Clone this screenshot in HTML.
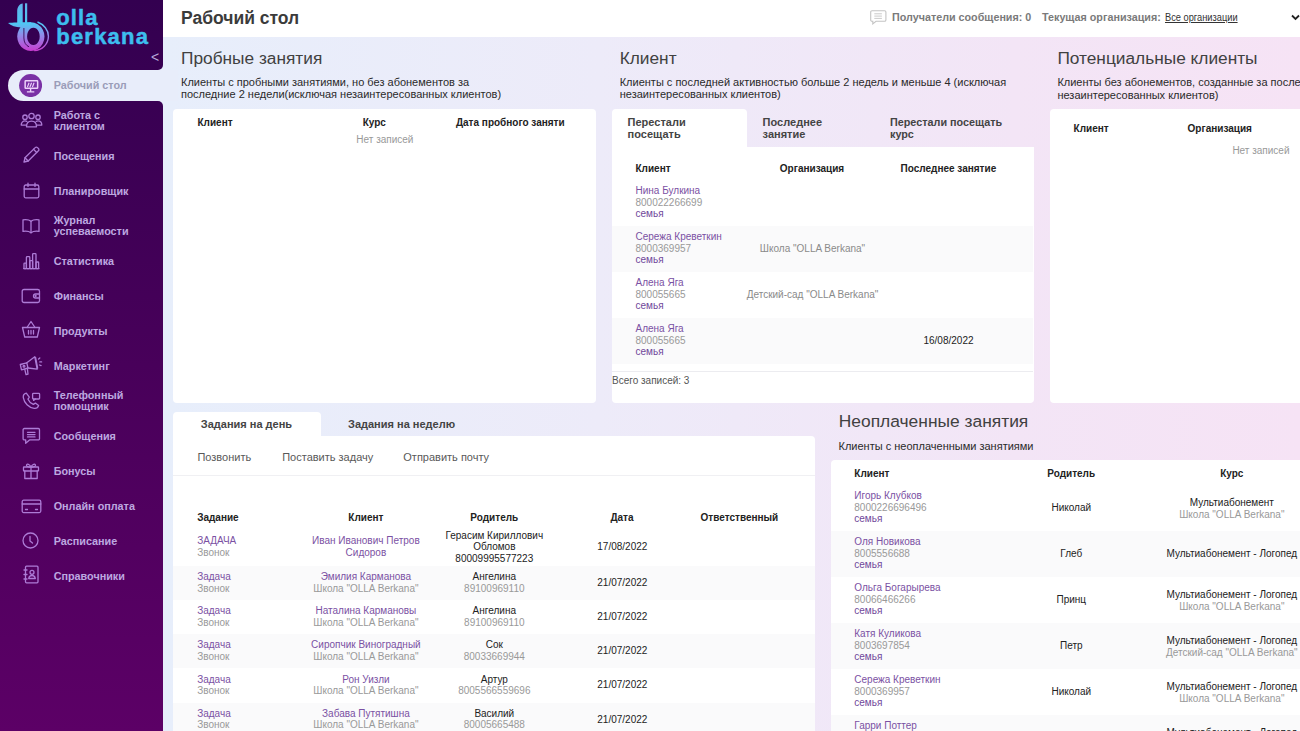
<!DOCTYPE html>
<html><head><meta charset="utf-8"><style>
html,body{margin:0;padding:0;}
body{width:1300px;height:731px;overflow:hidden;position:relative;font-family:"Liberation Sans", sans-serif;
background:linear-gradient(90deg,#e7eefb 0%,#e7eefb 12.5%,#edebf9 46%,#f3e5f6 78%,#f6e3f5 100%);}
.t{position:absolute;white-space:nowrap;line-height:1;}
.r{position:absolute;}
</style></head><body>
<div class="r" style="left:163px;top:0px;width:1137px;height:37px;background:#fff;"></div>
<div class="t" style="left:181.0px;top:10px;font-size:17.5px;font-weight:bold;color:#3b3b3b;">Рабочий стол</div>
<svg class="r" style="left:870px;top:10px" width="17" height="15" viewBox="0 0 17 15"><path d="M2 0.7h12.6a1.3 1.3 0 0 1 1.3 1.3v8a1.3 1.3 0 0 1-1.3 1.3H6l-3.2 2.6v-2.6H2a1.3 1.3 0 0 1-1.3-1.3V2A1.3 1.3 0 0 1 2 0.7z" fill="none" stroke="#c4c4c4" stroke-width="1.1"/><path d="M4.3 3.8h7.6M4.3 6.1h7.6M4.3 8.4h7.6" stroke="#c4c4c4" stroke-width="0.9"/></svg>
<div class="t" style="left:892.0px;top:12px;font-size:10.75px;font-weight:bold;color:#7a7a7a;">Получатели сообщения: 0</div>
<div class="t" style="left:1042.0px;top:12px;font-size:10.75px;font-weight:bold;color:#7a7a7a;">Текущая организация:</div>
<div class="t" style="left:1165.0px;top:12px;font-size:10.5px;color:#333;text-decoration:underline;transform-origin:0 0;transform:scaleX(0.883);">Все организации</div>
<svg class="r" style="left:1291px;top:14px" width="9" height="7" viewBox="0 0 9 7"><path d="M1 1.5l3.5 3.5 3.5-3.5" fill="none" stroke="#222" stroke-width="1.8"/></svg>
<div class="t" style="left:181.0px;top:50px;font-size:17.3px;color:#414141;">Пробные занятия</div>
<div class="t" style="left:181.0px;top:77px;font-size:11px;color:#2a2a2a;">Клиенты с пробными занятиями, но без абонементов за</div>
<div class="t" style="left:181.0px;top:89px;font-size:11px;color:#2a2a2a;">последние 2 недели(исключая незаинтересованных клиентов)</div>
<div class="r" style="left:173px;top:109px;width:423px;height:293.6px;background:#fff;border-radius:4px;"></div>
<div class="t" style="left:197.5px;top:118px;font-size:10px;font-weight:bold;color:#222;">Клиент</div>
<div class="t" style="left:374.3px;top:118px;font-size:10px;font-weight:bold;color:#222;transform:translateX(-50%);">Курс</div>
<div class="t" style="left:510.3px;top:118px;font-size:10px;font-weight:bold;color:#222;transform:translateX(-50%);">Дата пробного заняти</div>
<div class="t" style="left:384.9px;top:135px;font-size:10px;color:#999;transform:translateX(-50%);">Нет записей</div>
<div class="t" style="left:619.7px;top:50px;font-size:17.3px;color:#414141;">Клиент</div>
<div class="t" style="left:619.7px;top:77px;font-size:11px;color:#2a2a2a;">Клиенты с последней активностью больше 2 недель и меньше 4 (исключая</div>
<div class="t" style="left:619.7px;top:89px;font-size:11px;color:#2a2a2a;">незаинтересованных клиентов)</div>
<div class="r" style="left:612px;top:109px;width:135px;height:40px;background:#fff;border-radius:4px 4px 0 0;"></div>
<div class="r" style="left:612px;top:146.6px;width:422px;height:256px;background:#fff;border-radius:0 0 4px 4px;"></div>
<div class="t" style="left:627.6px;top:117px;font-size:11px;font-weight:bold;color:#444;">Перестали</div>
<div class="t" style="left:627.6px;top:129px;font-size:11px;font-weight:bold;color:#444;">посещать</div>
<div class="t" style="left:762.6px;top:117px;font-size:11px;font-weight:bold;color:#444;">Последнее</div>
<div class="t" style="left:762.6px;top:129px;font-size:11px;font-weight:bold;color:#444;">занятие</div>
<div class="t" style="left:890.0px;top:117px;font-size:10.8px;font-weight:bold;color:#444;">Перестали посещать</div>
<div class="t" style="left:890.0px;top:129px;font-size:10.8px;font-weight:bold;color:#444;">курс</div>
<div class="t" style="left:635.5px;top:164px;font-size:10px;font-weight:bold;color:#222;">Клиент</div>
<div class="t" style="left:812.0px;top:164px;font-size:10px;font-weight:bold;color:#222;transform:translateX(-50%);">Организация</div>
<div class="t" style="left:948.4px;top:164px;font-size:10px;font-weight:bold;color:#222;transform:translateX(-50%);">Последнее занятие</div>
<div class="t" style="left:635.5px;top:186px;font-size:10px;color:#7b51a3;">Нина Булкина</div>
<div class="t" style="left:635.5px;top:198px;font-size:10px;color:#999;">800022266699</div>
<div class="t" style="left:635.5px;top:209px;font-size:10px;color:#70479a;">семья</div>
<div class="r" style="left:612px;top:226px;width:421px;height:46px;background:#fafafb;"></div>
<div class="t" style="left:635.5px;top:232px;font-size:10px;color:#7b51a3;">Сережа Креветкин</div>
<div class="t" style="left:635.5px;top:244px;font-size:10px;color:#999;">8000369957</div>
<div class="t" style="left:635.5px;top:255px;font-size:10px;color:#70479a;">семья</div>
<div class="t" style="left:812.5px;top:244px;font-size:10px;color:#8a8a8a;transform:translateX(-50%);">Школа "OLLA Berkana"</div>
<div class="t" style="left:635.5px;top:278px;font-size:10px;color:#7b51a3;">Алена Яга</div>
<div class="t" style="left:635.5px;top:290px;font-size:10px;color:#999;">800055665</div>
<div class="t" style="left:635.5px;top:301px;font-size:10px;color:#70479a;">семья</div>
<div class="t" style="left:812.5px;top:290px;font-size:10px;color:#8a8a8a;transform:translateX(-50%);">Детский-сад "OLLA Berkana"</div>
<div class="r" style="left:612px;top:318px;width:421px;height:45.6px;background:#fafafb;"></div>
<div class="t" style="left:635.5px;top:324px;font-size:10px;color:#7b51a3;">Алена Яга</div>
<div class="t" style="left:635.5px;top:336px;font-size:10px;color:#999;">800055665</div>
<div class="t" style="left:635.5px;top:347px;font-size:10px;color:#70479a;">семья</div>
<div class="t" style="left:948.5px;top:336px;font-size:10px;color:#222;transform:translateX(-50%);">16/08/2022</div>
<div class="r" style="left:612px;top:371px;width:421px;height:1px;background:#ececf0;"></div>
<div class="t" style="left:612.0px;top:376px;font-size:10px;color:#555;">Всего записей: 3</div>
<div class="t" style="left:1057.4px;top:50px;font-size:17.3px;color:#414141;">Потенциальные клиенты</div>
<div class="t" style="left:1057.4px;top:77px;font-size:11px;color:#2a2a2a;">Клиенты без абонементов, созданные за последние 2 недели (исключая</div>
<div class="t" style="left:1057.4px;top:90px;font-size:11px;color:#2a2a2a;">незаинтересованных клиентов)</div>
<div class="r" style="left:1050px;top:109px;width:260px;height:293.6px;background:#fff;border-radius:4px;"></div>
<div class="t" style="left:1073.6px;top:124px;font-size:10px;font-weight:bold;color:#222;">Клиент</div>
<div class="t" style="left:1187.6px;top:124px;font-size:10px;font-weight:bold;color:#222;">Организация</div>
<div class="t" style="left:1232.4px;top:146px;font-size:10px;color:#999;">Нет записей</div>
<div class="r" style="left:173px;top:411.5px;width:148px;height:30px;background:#fff;border-radius:4px 4px 0 0;"></div>
<div class="r" style="left:173px;top:436px;width:642px;height:300px;background:#fff;border-radius:0 4px 0 0;"></div>
<div class="t" style="left:200.8px;top:419px;font-size:11px;font-weight:bold;color:#444;">Задания на день</div>
<div class="t" style="left:348.0px;top:419px;font-size:11px;font-weight:bold;color:#444;">Задания на неделю</div>
<div class="t" style="left:197.4px;top:452px;font-size:11px;color:#595959;">Позвонить</div>
<div class="t" style="left:282.2px;top:452px;font-size:11px;color:#595959;">Поставить задачу</div>
<div class="t" style="left:403.3px;top:452px;font-size:11px;color:#595959;">Отправить почту</div>
<div class="r" style="left:173px;top:475px;width:642px;height:1px;background:#f0f0f3;"></div>
<div class="t" style="left:197.2px;top:513px;font-size:10px;font-weight:bold;color:#222;">Задание</div>
<div class="t" style="left:365.9px;top:513px;font-size:10px;font-weight:bold;color:#222;transform:translateX(-50%);">Клиент</div>
<div class="t" style="left:494.3px;top:513px;font-size:10px;font-weight:bold;color:#222;transform:translateX(-50%);">Родитель</div>
<div class="t" style="left:622.0px;top:513px;font-size:10px;font-weight:bold;color:#222;transform:translateX(-50%);">Дата</div>
<div class="t" style="left:739.4px;top:513px;font-size:10px;font-weight:bold;color:#222;transform:translateX(-50%);">Ответственный</div>
<div class="t" style="left:197.2px;top:536px;font-size:10px;color:#7b51a3;">ЗАДАЧА</div>
<div class="t" style="left:197.2px;top:548px;font-size:10px;color:#999;">Звонок</div>
<div class="t" style="left:365.9px;top:536px;font-size:10px;color:#7b51a3;transform:translateX(-50%);">Иван Иванович Петров</div>
<div class="t" style="left:365.9px;top:548px;font-size:10px;color:#7b51a3;transform:translateX(-50%);">Сидоров</div>
<div class="t" style="left:494.3px;top:531px;font-size:10px;color:#222;transform:translateX(-50%);">Герасим Кириллович</div>
<div class="t" style="left:494.3px;top:542px;font-size:10px;color:#222;transform:translateX(-50%);">Обломов</div>
<div class="t" style="left:494.3px;top:554px;font-size:10px;color:#222;transform:translateX(-50%);">80009995577223</div>
<div class="t" style="left:622.3px;top:542px;font-size:10px;color:#222;transform:translateX(-50%);">17/08/2022</div>
<div class="r" style="left:173px;top:566px;width:642px;height:34px;background:#fafafb;"></div>
<div class="t" style="left:197.2px;top:572px;font-size:10px;color:#7b51a3;">Задача</div>
<div class="t" style="left:197.2px;top:584px;font-size:10px;color:#999;">Звонок</div>
<div class="t" style="left:365.9px;top:572px;font-size:10px;color:#7b51a3;transform:translateX(-50%);">Эмилия Карманова</div>
<div class="t" style="left:365.9px;top:584px;font-size:10px;color:#999;transform:translateX(-50%);">Школа "OLLA Berkana"</div>
<div class="t" style="left:494.3px;top:572px;font-size:10px;color:#222;transform:translateX(-50%);">Ангелина</div>
<div class="t" style="left:494.3px;top:584px;font-size:10px;color:#999;transform:translateX(-50%);">89100969110</div>
<div class="t" style="left:622.3px;top:578px;font-size:10px;color:#222;transform:translateX(-50%);">21/07/2022</div>
<div class="t" style="left:197.2px;top:606px;font-size:10px;color:#7b51a3;">Задача</div>
<div class="t" style="left:197.2px;top:618px;font-size:10px;color:#999;">Звонок</div>
<div class="t" style="left:365.9px;top:606px;font-size:10px;color:#7b51a3;transform:translateX(-50%);">Наталина Кармановы</div>
<div class="t" style="left:365.9px;top:618px;font-size:10px;color:#999;transform:translateX(-50%);">Школа "OLLA Berkana"</div>
<div class="t" style="left:494.3px;top:606px;font-size:10px;color:#222;transform:translateX(-50%);">Ангелина</div>
<div class="t" style="left:494.3px;top:618px;font-size:10px;color:#999;transform:translateX(-50%);">89100969110</div>
<div class="t" style="left:622.3px;top:612px;font-size:10px;color:#222;transform:translateX(-50%);">21/07/2022</div>
<div class="r" style="left:173px;top:634px;width:642px;height:34px;background:#fafafb;"></div>
<div class="t" style="left:197.2px;top:640px;font-size:10px;color:#7b51a3;">Задача</div>
<div class="t" style="left:197.2px;top:652px;font-size:10px;color:#999;">Звонок</div>
<div class="t" style="left:365.9px;top:640px;font-size:10px;color:#7b51a3;transform:translateX(-50%);">Сиропчик Виноградный</div>
<div class="t" style="left:365.9px;top:652px;font-size:10px;color:#999;transform:translateX(-50%);">Школа "OLLA Berkana"</div>
<div class="t" style="left:494.3px;top:640px;font-size:10px;color:#222;transform:translateX(-50%);">Сок</div>
<div class="t" style="left:494.3px;top:652px;font-size:10px;color:#999;transform:translateX(-50%);">80033669944</div>
<div class="t" style="left:622.3px;top:646px;font-size:10px;color:#222;transform:translateX(-50%);">21/07/2022</div>
<div class="t" style="left:197.2px;top:675px;font-size:10px;color:#7b51a3;">Задача</div>
<div class="t" style="left:197.2px;top:686px;font-size:10px;color:#999;">Звонок</div>
<div class="t" style="left:365.9px;top:675px;font-size:10px;color:#7b51a3;transform:translateX(-50%);">Рон Уизли</div>
<div class="t" style="left:365.9px;top:686px;font-size:10px;color:#999;transform:translateX(-50%);">Школа "OLLA Berkana"</div>
<div class="t" style="left:494.3px;top:675px;font-size:10px;color:#222;transform:translateX(-50%);">Артур</div>
<div class="t" style="left:494.3px;top:686px;font-size:10px;color:#999;transform:translateX(-50%);">8005566559696</div>
<div class="t" style="left:622.3px;top:680px;font-size:10px;color:#222;transform:translateX(-50%);">21/07/2022</div>
<div class="r" style="left:173px;top:703px;width:642px;height:40px;background:#fafafb;"></div>
<div class="t" style="left:197.2px;top:709px;font-size:10px;color:#7b51a3;">Задача</div>
<div class="t" style="left:197.2px;top:720px;font-size:10px;color:#999;">Звонок</div>
<div class="t" style="left:365.9px;top:709px;font-size:10px;color:#7b51a3;transform:translateX(-50%);">Забава Путятишна</div>
<div class="t" style="left:365.9px;top:720px;font-size:10px;color:#999;transform:translateX(-50%);">Школа "OLLA Berkana"</div>
<div class="t" style="left:494.3px;top:709px;font-size:10px;color:#222;transform:translateX(-50%);">Василий</div>
<div class="t" style="left:494.3px;top:720px;font-size:10px;color:#999;transform:translateX(-50%);">80005665488</div>
<div class="t" style="left:622.3px;top:715px;font-size:10px;color:#222;transform:translateX(-50%);">21/07/2022</div>
<div class="t" style="left:838.8px;top:413px;font-size:17.4px;color:#414141;">Неоплаченные занятия</div>
<div class="t" style="left:838.5px;top:441px;font-size:11px;color:#2a2a2a;">Клиенты с неоплаченными занятиями</div>
<div class="r" style="left:831px;top:460px;width:480px;height:280px;background:#fff;border-radius:4px 0 0 0;"></div>
<div class="t" style="left:854.3px;top:469px;font-size:10px;font-weight:bold;color:#222;">Клиент</div>
<div class="t" style="left:1071.2px;top:469px;font-size:10px;font-weight:bold;color:#222;transform:translateX(-50%);">Родитель</div>
<div class="t" style="left:1231.8px;top:469px;font-size:10px;font-weight:bold;color:#222;transform:translateX(-50%);">Курс</div>
<div class="t" style="left:854.3px;top:491px;font-size:10px;color:#7b51a3;">Игорь Клубков</div>
<div class="t" style="left:854.3px;top:503px;font-size:10px;color:#999;">8000226696496</div>
<div class="t" style="left:854.3px;top:514px;font-size:10px;color:#70479a;">семья</div>
<div class="t" style="left:1071.3px;top:503px;font-size:10px;color:#222;transform:translateX(-50%);">Николай</div>
<div class="t" style="left:1231.8px;top:498px;font-size:10px;color:#222;transform:translateX(-50%);">Мультиабонемент</div>
<div class="t" style="left:1231.8px;top:510px;font-size:10px;color:#999;transform:translateX(-50%);">Школа "OLLA Berkana"</div>
<div class="r" style="left:831px;top:531px;width:469px;height:46px;background:#fafafb;"></div>
<div class="t" style="left:854.3px;top:537px;font-size:10px;color:#7b51a3;">Оля Новикова</div>
<div class="t" style="left:854.3px;top:549px;font-size:10px;color:#999;">8005556688</div>
<div class="t" style="left:854.3px;top:560px;font-size:10px;color:#70479a;">семья</div>
<div class="t" style="left:1071.3px;top:549px;font-size:10px;color:#222;transform:translateX(-50%);">Глеб</div>
<div class="t" style="left:1231.8px;top:549px;font-size:10px;color:#222;transform:translateX(-50%);">Мультиабонемент - Логопед</div>
<div class="t" style="left:854.3px;top:583px;font-size:10px;color:#7b51a3;">Ольга Богарырева</div>
<div class="t" style="left:854.3px;top:595px;font-size:10px;color:#999;">80066466266</div>
<div class="t" style="left:854.3px;top:606px;font-size:10px;color:#70479a;">семья</div>
<div class="t" style="left:1071.3px;top:595px;font-size:10px;color:#222;transform:translateX(-50%);">Принц</div>
<div class="t" style="left:1231.8px;top:590px;font-size:10px;color:#222;transform:translateX(-50%);">Мультиабонемент - Логопед</div>
<div class="t" style="left:1231.8px;top:602px;font-size:10px;color:#999;transform:translateX(-50%);">Школа "OLLA Berkana"</div>
<div class="r" style="left:831px;top:623px;width:469px;height:46px;background:#fafafb;"></div>
<div class="t" style="left:854.3px;top:629px;font-size:10px;color:#7b51a3;">Катя Куликова</div>
<div class="t" style="left:854.3px;top:641px;font-size:10px;color:#999;">8003697854</div>
<div class="t" style="left:854.3px;top:652px;font-size:10px;color:#70479a;">семья</div>
<div class="t" style="left:1071.3px;top:641px;font-size:10px;color:#222;transform:translateX(-50%);">Петр</div>
<div class="t" style="left:1231.8px;top:636px;font-size:10px;color:#222;transform:translateX(-50%);">Мультиабонемент - Логопед</div>
<div class="t" style="left:1231.8px;top:648px;font-size:10px;color:#999;transform:translateX(-50%);">Детский-сад "OLLA Berkana"</div>
<div class="t" style="left:854.3px;top:675px;font-size:10px;color:#7b51a3;">Сережа Креветкин</div>
<div class="t" style="left:854.3px;top:687px;font-size:10px;color:#999;">8000369957</div>
<div class="t" style="left:854.3px;top:698px;font-size:10px;color:#70479a;">семья</div>
<div class="t" style="left:1071.3px;top:687px;font-size:10px;color:#222;transform:translateX(-50%);">Николай</div>
<div class="t" style="left:1231.8px;top:682px;font-size:10px;color:#222;transform:translateX(-50%);">Мультиабонемент - Логопед</div>
<div class="t" style="left:1231.8px;top:694px;font-size:10px;color:#999;transform:translateX(-50%);">Школа "OLLA Berkana"</div>
<div class="r" style="left:831px;top:715px;width:469px;height:30px;background:#fafafb;"></div>
<div class="t" style="left:854.3px;top:721px;font-size:10px;color:#7b51a3;">Гарри Поттер</div>
<div class="t" style="left:854.3px;top:733px;font-size:10px;color:#999;">8000000000</div>
<div class="t" style="left:854.3px;top:744px;font-size:10px;color:#70479a;">семья</div>
<div class="t" style="left:1071.3px;top:733px;font-size:10px;color:#222;transform:translateX(-50%);">Николай</div>
<div class="t" style="left:1231.8px;top:728px;font-size:10px;color:#222;transform:translateX(-50%);">Мультиабонемент - Логопед</div>
<div class="t" style="left:1231.8px;top:740px;font-size:10px;color:#999;transform:translateX(-50%);">Школа "OLLA Berkana"</div>
<div class="r" style="left:0px;top:0px;width:163px;height:70px;background:linear-gradient(180deg,#330050 0%,#48005a 50%,#5c0066 100%);background-size:163px 731px;background-position:0 0;border-bottom-right-radius:5px;"></div>
<div class="r" style="left:0px;top:70px;width:40px;height:31px;background:linear-gradient(180deg,#330050 0%,#48005a 50%,#5c0066 100%);background-size:163px 731px;background-position:0 -70px;"></div>
<div class="r" style="left:0px;top:101px;width:163px;height:630px;background:linear-gradient(180deg,#330050 0%,#48005a 50%,#5c0066 100%);background-size:163px 731px;background-position:0 -101px;border-top-right-radius:5px;"></div>
<div class="r" style="left:8px;top:70px;width:170px;height:31px;background:#e8edfa;border-radius:15.5px 0 0 15.5px;"></div>
<svg class="r" style="left:19.2px;top:73.5px" width="23.2" height="23.2" viewBox="0 0 23.2 23.2"><circle cx="11.6" cy="11.6" r="11.5" fill="#7a31a5"/><rect x="6.15" y="6.85" width="12.5" height="7.4" rx="0.6" fill="none" stroke="#ecd2fa" stroke-width="1.5"/><path d="M8.6 12.6l1.3-3.4M11.1 12.6l1.3-3.4M13.6 12.6l1.3-3.4" stroke="#ecd2fa" stroke-width="1.2" stroke-linecap="round"/><path d="M11.6 14.5v2.8M7.9 17.9h7.4" stroke="#ecd2fa" stroke-width="1.4"/></svg>
<div class="t" style="left:53.7px;top:80px;font-size:10.8px;font-weight:bold;color:#9a9cb8;">Рабочий стол</div>
<div class="t" style="left:53.7px;top:110px;font-size:10.8px;font-weight:bold;color:#bda8e0;">Работа с</div>
<div class="t" style="left:53.7px;top:121px;font-size:10.8px;font-weight:bold;color:#bda8e0;">клиентом</div>
<div class="t" style="left:53.7px;top:151px;font-size:10.8px;font-weight:bold;color:#bda8e0;">Посещения</div>
<div class="t" style="left:53.7px;top:186px;font-size:10.8px;font-weight:bold;color:#bda8e0;">Планировщик</div>
<div class="t" style="left:53.7px;top:215px;font-size:10.8px;font-weight:bold;color:#bda8e0;">Журнал</div>
<div class="t" style="left:53.7px;top:226px;font-size:10.8px;font-weight:bold;color:#bda8e0;">успеваемости</div>
<div class="t" style="left:53.7px;top:256px;font-size:10.8px;font-weight:bold;color:#bda8e0;">Статистика</div>
<div class="t" style="left:53.7px;top:291px;font-size:10.8px;font-weight:bold;color:#bda8e0;">Финансы</div>
<div class="t" style="left:53.7px;top:326px;font-size:10.8px;font-weight:bold;color:#bda8e0;">Продукты</div>
<div class="t" style="left:53.7px;top:361px;font-size:10.8px;font-weight:bold;color:#bda8e0;">Маркетинг</div>
<div class="t" style="left:53.7px;top:390px;font-size:10.8px;font-weight:bold;color:#bda8e0;">Телефонный</div>
<div class="t" style="left:53.7px;top:401px;font-size:10.8px;font-weight:bold;color:#bda8e0;">помощник</div>
<div class="t" style="left:53.7px;top:431px;font-size:10.8px;font-weight:bold;color:#bda8e0;">Сообщения</div>
<div class="t" style="left:53.7px;top:466px;font-size:10.8px;font-weight:bold;color:#bda8e0;">Бонусы</div>
<div class="t" style="left:53.7px;top:501px;font-size:10.8px;font-weight:bold;color:#bda8e0;">Онлайн оплата</div>
<div class="t" style="left:53.7px;top:536px;font-size:10.8px;font-weight:bold;color:#bda8e0;">Расписание</div>
<div class="t" style="left:53.7px;top:571px;font-size:10.8px;font-weight:bold;color:#bda8e0;">Справочники</div>
<svg class="r" style="left:20px;top:112px" width="23" height="17" viewBox="0 0 23 17" fill="none" stroke="#ad7bd6" stroke-width="1.3" stroke-linecap="round" stroke-linejoin="round"><circle cx="11.5" cy="4" r="2.7"/><circle cx="5" cy="5.2" r="2.2"/><circle cx="18" cy="5.2" r="2.2"/><path d="M6.5 14.8c0-3.5 2.2-5.6 5-5.6s5 2.1 5 5.6z"/><path d="M6.8 9.4c-0.6-0.4-1.2-0.5-1.8-0.5-2.2 0-3.8 1.8-3.8 4.2h5.3"/><path d="M16.2 9.4c0.6-0.4 1.2-0.5 1.8-0.5 2.2 0 3.8 1.8 3.8 4.2h-5.3"/></svg>
<svg class="r" style="left:22px;top:146px" width="18" height="18" viewBox="0 0 18 18" fill="none" stroke="#ad7bd6" stroke-width="1.3" stroke-linecap="round" stroke-linejoin="round"><path d="M2 16l1-4.2L13.2 1.6a1.6 1.6 0 0 1 2.3 0l0.9 0.9a1.6 1.6 0 0 1 0 2.3L6.2 15z"/><path d="M11.5 3.3l3.2 3.2M3 11.8l3.2 3.2"/></svg>
<svg class="r" style="left:23px;top:182px" width="17" height="17" viewBox="0 0 17 17" fill="none" stroke="#ad7bd6" stroke-width="1.3" stroke-linecap="round" stroke-linejoin="round"><rect x="1.2" y="3" width="14.6" height="12.8" rx="1.5"/><path d="M1.2 7h14.6M5 1.2v3.2M12 1.2v3.2"/></svg>
<svg class="r" style="left:22px;top:218px" width="18" height="16" viewBox="0 0 18 16" fill="none" stroke="#ad7bd6" stroke-width="1.3" stroke-linecap="round" stroke-linejoin="round"><path d="M9 3.2C7 1.6 4 1.4 1 1.8v11.6c3-0.4 6 -0.2 8 1.4 2-1.6 5-1.8 8-1.4V1.8c-3-0.4-6-0.2-8 1.4z"/><path d="M9 3.2v11.6"/></svg>
<svg class="r" style="left:22px;top:252px" width="18" height="18" viewBox="0 0 18 18" fill="none" stroke="#ad7bd6" stroke-width="1.3" stroke-linecap="round" stroke-linejoin="round"><rect x="2" y="11.2" width="2.4" height="5.4" rx="0.6"/><rect x="4.4" y="4.6" width="3.4" height="12" rx="0.8"/><rect x="7.8" y="8.6" width="2.8" height="8" rx="0.6"/><rect x="10.6" y="1.6" width="3.4" height="15" rx="0.8"/><rect x="14" y="10" width="2.6" height="6.6" rx="0.6"/><path d="M1.6 16.6h15.4"/></svg>
<svg class="r" style="left:21px;top:288px" width="20" height="16" viewBox="0 0 20 16" fill="none" stroke="#ad7bd6" stroke-width="1.3" stroke-linecap="round" stroke-linejoin="round"><rect x="1.2" y="1.5" width="17.3" height="13" rx="1.8"/><path d="M18.5 6h-4a2 2 0 0 0 0 4h4"/><circle cx="14.6" cy="8" r="0.5"/></svg>
<svg class="r" style="left:21px;top:320px" width="20" height="19" viewBox="0 0 20 19" fill="none" stroke="#ad7bd6" stroke-width="1.3" stroke-linecap="round" stroke-linejoin="round"><path d="M6 7.5l4-6 4 6"/><path d="M1.5 7.5h17l-2.2 9.5H3.7z"/><path d="M7.5 10.5v3.5M10 10.5v3.5M12.5 10.5v3.5"/></svg>
<svg class="r" style="left:16px;top:352px" width="30" height="26" viewBox="0 0 30 26" fill="none" stroke="#ad7bd6" stroke-width="1.3" stroke-linecap="round" stroke-linejoin="round"><path d="M4.3 12.5L10.8 10.8L12 16L5.5 17.8Z"/><path d="M10.8 10.8L18.8 4.8L21.2 17.2L12 16"/><path d="M19.6 5.5L21.6 16"/><circle cx="8" cy="14.3" r="0.9"/><path d="M8.8 17.3L10 22.6L12 22.1L11.4 16.6"/><path d="M22.6 7l1.2-1M23.8 9.9h1.8M23.5 13l1.6 0.6"/></svg>
<svg class="r" style="left:21px;top:389px" width="21" height="21" viewBox="0 0 21 21" fill="none" stroke="#ad7bd6" stroke-width="1.3" stroke-linecap="round" stroke-linejoin="round"><path d="M5.3 4.2C3.5 4.7 2 6.3 2.3 8.6 3.2 14 7.8 18.6 13.2 19.4 15.4 19.7 17 18.3 17.6 16.6L14.4 14.1 12.3 15.4C10 14.4 8 12.4 7 10.2L8.3 8.1Z"/><rect x="11.6" y="4.4" width="7" height="5.6" rx="0.8"/><path d="M12.6 10v1.4l1.8-1.4"/></svg>
<svg class="r" style="left:21.5px;top:426.5px" width="19" height="18" viewBox="0 0 19 18" fill="none" stroke="#ad7bd6" stroke-width="1.3" stroke-linecap="round" stroke-linejoin="round"><path d="M2.3 1.5h14a1.2 1.2 0 0 1 1.2 1.2v9a1.2 1.2 0 0 1-1.2 1.2H7.5l-3.8 3.3v-3.3H2.3a1.2 1.2 0 0 1-1.2-1.2V2.7a1.2 1.2 0 0 1 1.2-1.2z"/><path d="M5.5 5.3h7.5M5.5 7.6h7.5M5.5 9.9h7.5"/></svg>
<svg class="r" style="left:22px;top:462px" width="18" height="18" viewBox="0 0 18 18" fill="none" stroke="#ad7bd6" stroke-width="1.3" stroke-linecap="round" stroke-linejoin="round"><rect x="1.5" y="5" width="15" height="4" rx="0.5"/><path d="M2.8 9v7.5h12.4V9M9 5v11.5"/><path d="M9 5c-1-2.5-4.5-4-4.5-1.5C4.5 5 9 5 9 5zM9 5c1-2.5 4.5-4 4.5-1.5 0 1.5-4.5 1.5-4.5 1.5z"/></svg>
<svg class="r" style="left:21px;top:499px" width="21" height="15" viewBox="0 0 21 15" fill="none" stroke="#ad7bd6" stroke-width="1.3" stroke-linecap="round" stroke-linejoin="round"><rect x="1.2" y="1.2" width="18.6" height="12.4" rx="1.5"/><path d="M1.2 5h18.6"/><path d="M4.5 10.5h2M14.5 10.5h2"/></svg>
<svg class="r" style="left:22px;top:532px" width="17" height="17" viewBox="0 0 17 17" fill="none" stroke="#ad7bd6" stroke-width="1.3" stroke-linecap="round" stroke-linejoin="round"><circle cx="8.5" cy="8.5" r="7.5"/><path d="M8 4.5v4.5l2.5 2"/></svg>
<svg class="r" style="left:22px;top:565px" width="18" height="19" viewBox="0 0 18 19" fill="none" stroke="#ad7bd6" stroke-width="1.3" stroke-linecap="round" stroke-linejoin="round"><rect x="3.5" y="1.2" width="12.5" height="16.6" rx="1"/><path d="M2 5h3M2 9.5h3M2 14h3"/><circle cx="10" cy="7.3" r="2"/><path d="M6.7 13.5c0.3-2 1.5-3 3.3-3s3 1 3.3 3z"/></svg>
<div class="t" style="left:151.0px;top:50px;font-size:14px;color:#b8a8d8;">&lt;</div>
<svg class="r" style="left:0;top:0" width="55" height="55" viewBox="0 0 55 55">
<defs><linearGradient id="lg" gradientUnits="userSpaceOnUse" x1="0" y1="3" x2="0" y2="51"><stop offset="0" stop-color="#62b2ea"/><stop offset="0.42" stop-color="#4ec8f4"/><stop offset="0.65" stop-color="#8c90ea"/><stop offset="1" stop-color="#c83cd0"/></linearGradient></defs>
<path d="M17.2 25 L17.2 11 C17.2 7, 19.3 4.2, 22.7 3.6 L22.7 25 Z" fill="url(#lg)"/>
<path fill-rule="evenodd" fill="url(#lg)" d="M30.85 22.2 A13.65 14.4 0 1 1 30.849 22.2 Z M33.4 27.7 A6.3 8.7 0 1 0 33.401 27.7 Z"/>
<path d="M8 22.9 C13 22.4, 19 22.2, 31 22.2 L31 27.2 L21 27.4 C15.5 27.2, 11 25.5, 8 22.9 Z" fill="url(#lg)"/>
<rect x="25" y="3.3" width="2.2" height="20" fill="url(#lg)"/>
<path d="M23.9 28 L23.9 38 C23.9 42.5, 26 45.5, 29 46.8" fill="none" stroke="#3a0755" stroke-width="0.9"/>
<path d="M22.7 3.6 L22.7 22.3 M25 3.3 L25 22.3" stroke="#330050" stroke-width="0.01"/>
<path d="M37.5 22 C44 24.5, 48.4 30, 48.4 36.2 C48.4 44, 42.2 50.2, 34.2 50.5" fill="none" stroke="url(#lg)" stroke-width="1.4"/>
</svg>
<div class="t" style="left:56.3px;top:7px;font-size:22px;font-weight:bold;color:#3dbdee;letter-spacing:1.1px;-webkit-text-stroke:0.5px #3dbdee;">olla</div>
<div class="t" style="left:56.3px;top:26px;font-size:22px;font-weight:bold;color:#3dbdee;letter-spacing:1.2px;-webkit-text-stroke:0.5px #3dbdee;">berkana</div>
</body></html>
